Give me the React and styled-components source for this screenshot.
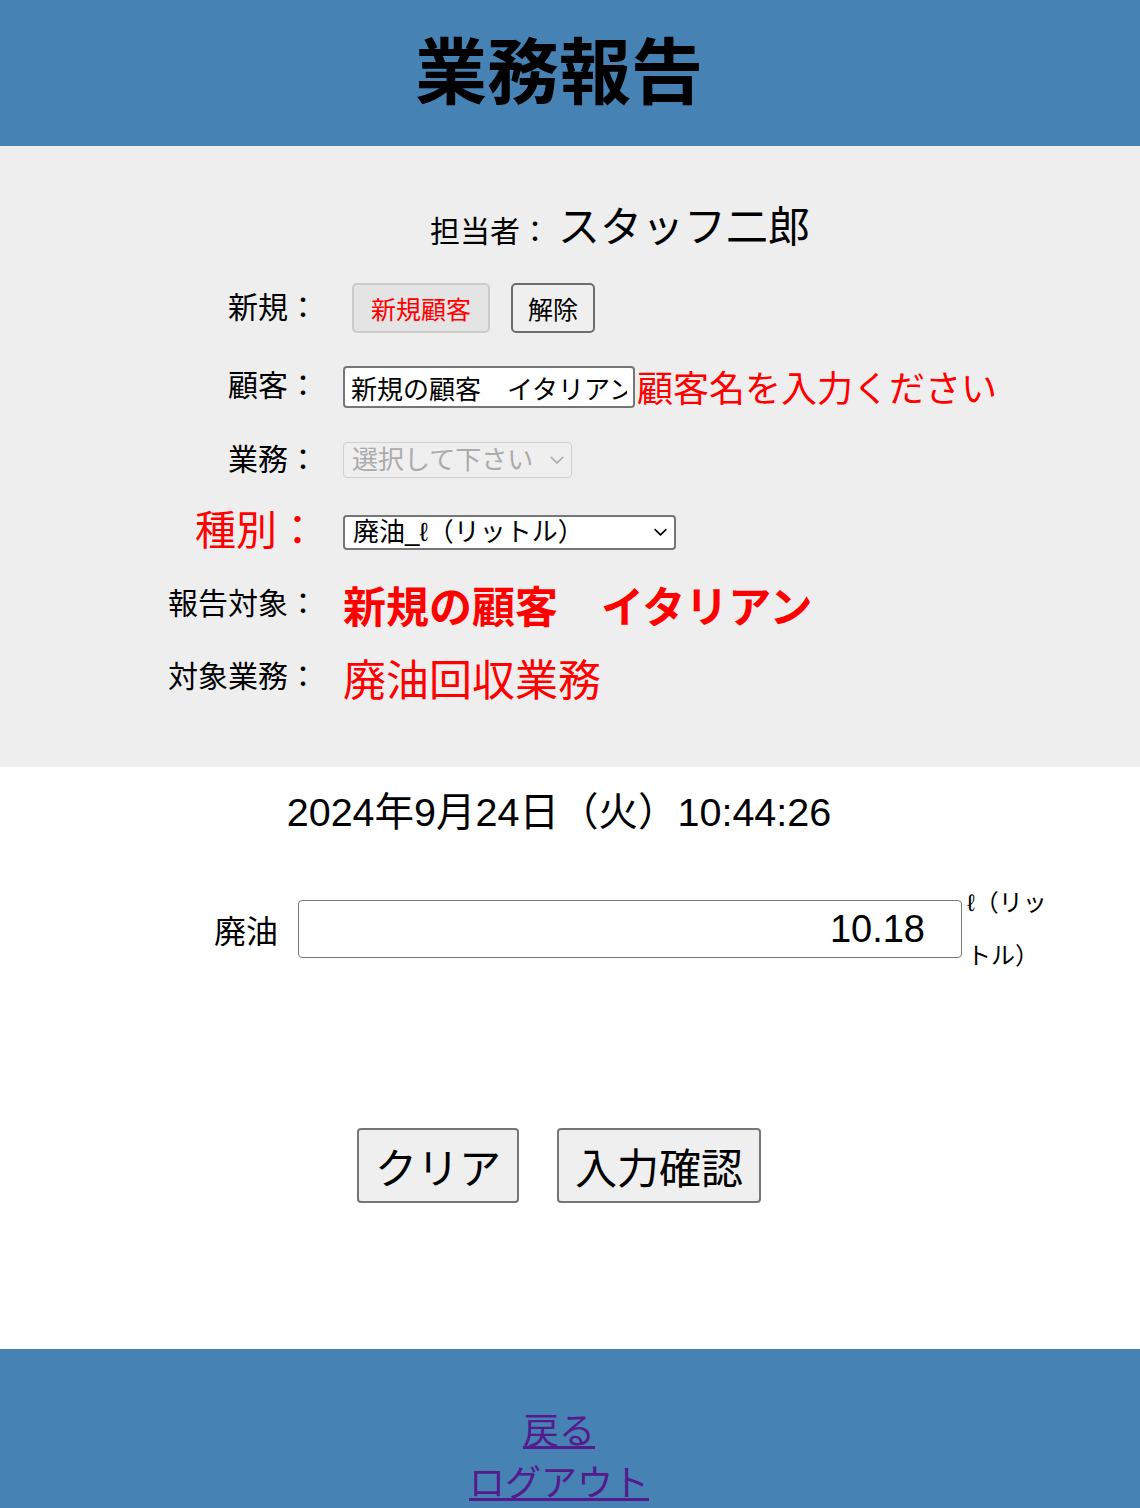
import React from "react";
import styled, { createGlobalStyle } from "styled-components";

const GlobalStyle = createGlobalStyle`
  html, body {
    margin: 0;
    padding: 0;
    background: #ffffff;
  }
  body {
    font-family: "Liberation Sans", "Noto Sans CJK JP", sans-serif;
    color: #000;
  }
`;

const Header = styled.header`
  height: 146px;
  background: #4682b4;
  display: flex;
  justify-content: center;
  align-items: center;
  padding-right: 22px;
`;

const Title = styled.h1`
  margin: 0;
  font-size: 72px;
  font-weight: 700;
  line-height: 1;
`;

const Panel = styled.section`
  background: #eeeeee;
  padding: 47px 0 54px;
`;

const StaffLine = styled.div`
  display: flex;
  align-items: baseline;
  height: 62px;
  padding-left: 430px;
  margin-bottom: 13px;
`;

const StaffLabel = styled.span`
  font-size: 30px;
`;

const StaffName = styled.span`
  margin-left: 8px;
  font-size: 42px;
`;

const FormGrid = styled.div`
  display: grid;
  grid-template-columns: 318px 1fr;
  grid-template-rows: 80px 76px 72px 72px 72px 73px;
  column-gap: 25px;
  align-items: center;
`;

const Label = styled.div`
  text-align: right;
  font-size: ${({ $size }) => $size || 30}px;
  line-height: 1.2;
  color: ${({ $red }) => ($red ? "#ff0000" : "#000")};
  white-space: nowrap;
`;

const Cell = styled.div`
  display: flex;
  align-items: center;
`;

const SmallButton = styled.button`
  height: 50px;
  width: ${({ $w }) => $w}px;
  margin-left: ${({ $ml }) => $ml}px;
  font-family: inherit;
  font-size: 25px;
  border-radius: 5px;
  padding: 0;
  color: ${({ $red }) => ($red ? "#ff0000" : "#000")};
  background: ${({ $red }) => ($red ? "#e4e4e4" : "#efefef")};
  border: 2px solid ${({ $red }) => ($red ? "#cbcbcb" : "#6e6e6e")};
`;

const TextInput = styled.input`
  box-sizing: border-box;
  width: 292px;
  height: 42px;
  margin-top: 2px;
  padding: 0 6px;
  font-family: inherit;
  font-size: 26px;
  color: #000;
  background: #fff;
  border: 2px solid #767676;
  border-radius: 4px;
  outline: none;
`;

const ErrorText = styled.span`
  margin-left: 2px;
  font-size: 36px;
  color: #ff0000;
  white-space: nowrap;
`;

const SelectWrap = styled.div`
  position: relative;
  display: inline-block;
`;

const Select = styled.select`
  box-sizing: border-box;
  appearance: none;
  -webkit-appearance: none;
  width: ${({ $w }) => $w}px;
  height: ${({ $h }) => $h}px;
  padding: 0 8px;
  font-family: inherit;
  font-size: 26px;
  border-radius: 4px;
  color: ${({ disabled }) => (disabled ? "#ababab" : "#000")};
  background: ${({ disabled }) => (disabled ? "#efefef" : "#fff")};
  border: ${({ disabled }) =>
    disabled ? "1.5px solid #d0d0d0" : "2px solid #767676"};
  opacity: 1;
`;

const Chevron = styled.svg`
  position: absolute;
  right: ${({ $r }) => $r}px;
  top: 50%;
  transform: translateY(-50%);
  pointer-events: none;
`;

const TargetValue = styled.div`
  font-size: 43px;
  font-weight: ${({ $bold }) => ($bold ? 700 : 400)};
  color: #ff0000;
  white-space: nowrap;
`;

const Main = styled.main`
  padding-top: 18px;
  padding-bottom: 146px;
`;

const DateLine = styled.div`
  text-align: center;
  font-size: 39.5px;
  line-height: 54px;
  padding-right: 22px;
`;

const OilRow = styled.div`
  display: flex;
  align-items: center;
  margin-top: 37px;
  padding-left: 214px;
  height: 106px;
`;

const OilLabel = styled.div`
  font-size: 32px;
  width: 64px;
  white-space: nowrap;
`;

const OilInput = styled.input`
  box-sizing: border-box;
  margin-left: 20px;
  width: 664px;
  height: 58px;
  padding: 0 36px 0 8px;
  text-align: right;
  font-family: inherit;
  font-size: 38px;
  color: #000;
  background: #fff;
  border: 1.5px solid #7a7a7a;
  border-radius: 4px;
  outline: none;
`;

const Unit = styled.div`
  width: 100px;
  margin-left: 5px;
  font-size: 24px;
  line-height: 53px;
`;

const Actions = styled.div`
  display: flex;
  justify-content: center;
  gap: 38px;
  margin-top: 146px;
  padding-right: 22px;
`;

const BigButton = styled.button`
  box-sizing: border-box;
  height: 75px;
  padding: 0 16px;
  font-family: inherit;
  font-size: 42px;
  color: #000;
  background: #efefef;
  border: 2px solid #767676;
  border-radius: 4px;
`;

const Footer = styled.footer`
  background: #4682b4;
  padding: 57px 22px 20px 0;
  display: flex;
  flex-direction: column;
  align-items: center;
`;

const FooterLink = styled.a`
  font-size: 36px;
  line-height: 52px;
  color: #551a8b;
  text-decoration: underline;
`;

const ChevronIcon = ({ color, r, size }) => (
  <Chevron $r={r} width={size} height={size * 0.6} viewBox="0 0 14 8.4">
    <polyline
      points="1.5,1.5 7,6.8 12.5,1.5"
      fill="none"
      stroke={color}
      strokeWidth="1.5"
    />
  </Chevron>
);

export default function App() {
  return (
    <>
      <GlobalStyle />
      <Header>
        <Title>業務報告</Title>
      </Header>

      <Panel>
        <StaffLine>
          <StaffLabel>担当者：</StaffLabel>
          <StaffName>スタッフ二郎</StaffName>
        </StaffLine>

        <FormGrid>
          <Label>新規：</Label>
          <Cell>
            <SmallButton $red $w={138} $ml={9}>新規顧客</SmallButton>
            <SmallButton $w={84} $ml={21}>解除</SmallButton>
          </Cell>

          <Label>顧客：</Label>
          <Cell>
            <TextInput readOnly value="新規の顧客　イタリアン" />
            <ErrorText>顧客名を入力ください</ErrorText>
          </Cell>

          <Label>業務：</Label>
          <Cell>
            <SelectWrap>
              <Select disabled $w={229} $h={36}>
                <option>選択して下さい</option>
              </Select>
              <ChevronIcon color="#b0b0b0" r={7} size={16} />
            </SelectWrap>
          </Cell>

          <Label $red $size={41}>種別：</Label>
          <Cell>
            <SelectWrap>
              <Select $w={333} $h={35} defaultValue="oil">
                <option value="oil">廃油_ℓ（リットル）</option>
              </Select>
              <ChevronIcon color="#000" r={8} size={15} />
            </SelectWrap>
          </Cell>

          <Label>報告対象：</Label>
          <Cell>
            <TargetValue $bold>新規の顧客　イタリアン</TargetValue>
          </Cell>

          <Label>対象業務：</Label>
          <Cell>
            <TargetValue>廃油回収業務</TargetValue>
          </Cell>
        </FormGrid>
      </Panel>

      <Main>
        <DateLine>2024年9月24日（火）10:44:26</DateLine>
        <OilRow>
          <OilLabel>廃油</OilLabel>
          <OilInput readOnly value="10.18" />
          <Unit>ℓ（リットル）</Unit>
        </OilRow>
        <Actions>
          <BigButton>クリア</BigButton>
          <BigButton>入力確認</BigButton>
        </Actions>
      </Main>

      <Footer>
        <FooterLink href="#back">戻る</FooterLink>
        <FooterLink href="#logout">ログアウト</FooterLink>
      </Footer>
    </>
  );
}
